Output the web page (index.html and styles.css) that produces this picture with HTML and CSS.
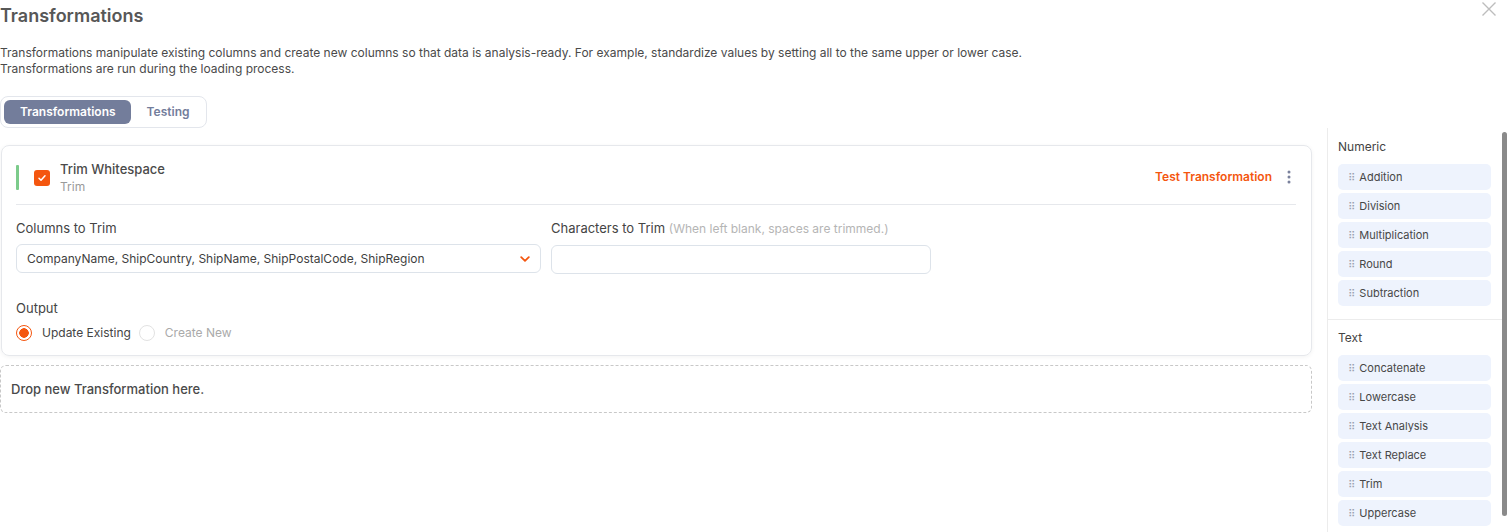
FILE: index.html
```html
<!doctype html>
<html lang="en">
    <head>
        <meta charset="UTF-8" />
        <meta name="viewport" content="width=device-width, initial-scale=1.0" />
        <title>Transformations</title>
        <link rel="stylesheet" href="styles.css">
    </head>
    <body>
        <div class="header">
            <h1 class="title">Transformations</h1>
            <button class="close" aria-label="Close">
                <svg width="16" height="16" viewBox="0 0 16 16"><path d="M1.5 1.5l13 13M14.5 1.5l-13 13" stroke="#bdbdbd" stroke-width="1.4" fill="none"/></svg>
            </button>
        </div>
        <p class="desc">
            Transformations manipulate existing columns and create new columns so that data is analysis-ready. For example, standardize values by setting all to the same upper or lower case.<br>
            Transformations are run during the loading process.
        </p>
        <div class="tabs">
            <span class="tab active">Transformations</span>
            <span class="tab">Testing</span>
        </div>

        <div class="workspace">
            <div class="main">
                <div class="card">
                    <div class="cardHead">
                        <span class="statusBar"></span>
                        <span class="check">
                            <svg width="10" height="10" viewBox="0 0 10 10"><path d="M2 5.2l2 2 4-4.4" stroke="#fff" stroke-width="1.5" fill="none" stroke-linecap="round" stroke-linejoin="round"/></svg>
                        </span>
                        <div class="cardTitle">
                            <div class="name">Trim Whitespace</div>
                            <div class="type">Trim</div>
                        </div>
                        <a class="testLink">Test Transformation</a>
                        <span class="kebab">
                            <svg width="4" height="14" viewBox="0 0 4 14"><circle cx="2" cy="2" r="1.5" fill="#7a819c"/><circle cx="2" cy="7" r="1.5" fill="#7a819c"/><circle cx="2" cy="12" r="1.5" fill="#7a819c"/></svg>
                        </span>
                    </div>
                    <div class="fields">
                        <div class="field wide">
                            <label class="fieldLabel">Columns to Trim</label>
                            <div class="select">
                                <span>CompanyName, ShipCountry, ShipName, ShipPostalCode, ShipRegion</span>
                                <svg width="10" height="6" viewBox="0 0 10 6"><path d="M1.2 1.2L5 4.8l3.8-3.6" stroke="#f4560f" stroke-width="1.8" fill="none" stroke-linecap="round" stroke-linejoin="round"/></svg>
                            </div>
                        </div>
                        <div class="field narrow">
                            <label class="fieldLabel">Characters to Trim <span class="hint">(When left blank, spaces are trimmed.)</span></label>
                            <input class="textInput" type="text" />
                        </div>
                    </div>
                    <div class="output">
                        <div class="fieldLabel">Output</div>
                        <div class="radios">
                            <label class="radio on"><span class="dot"></span>Update Existing</label>
                            <label class="radio off"><span class="dot"></span>Create New</label>
                        </div>
                    </div>
                </div>
                <div class="dropZone">Drop new Transformation here.</div>
            </div>

            <div class="sidebar">
                <div class="group">
                    <div class="groupTitle">Numeric</div>
                    <div class="item"><span class="grip">⠿</span>Addition</div>
                    <div class="item"><span class="grip">⠿</span>Division</div>
                    <div class="item"><span class="grip">⠿</span>Multiplication</div>
                    <div class="item"><span class="grip">⠿</span>Round</div>
                    <div class="item"><span class="grip">⠿</span>Subtraction</div>
                </div>
                <div class="group">
                    <div class="groupTitle">Text</div>
                    <div class="item"><span class="grip">⠿</span>Concatenate</div>
                    <div class="item"><span class="grip">⠿</span>Lowercase</div>
                    <div class="item"><span class="grip">⠿</span>Text Analysis</div>
                    <div class="item"><span class="grip">⠿</span>Text Replace</div>
                    <div class="item"><span class="grip">⠿</span>Trim</div>
                    <div class="item"><span class="grip">⠿</span>Uppercase</div>
                </div>
                <div class="scrollThumb"></div>
            </div>
        </div>
    </body>
</html>
```

FILE: styles.css
```css
body {
    margin: 0;
    font-family: Inter, "Noto Sans", sans-serif;
    color: #444;
    background: #fff;
    overflow: hidden;
}
.header {
    display: flex;
    justify-content: space-between;
    align-items: flex-start;
    height: 32px;
}
.title {
    margin: 0;
    padding-top: 5px;
    font-size: 18px;
    line-height: 22px;
    font-weight: 600;
    color: #575757;
}
.close {
    border: none;
    background: none;
    padding: 0;
    margin: 1px 10px 0 0;
    width: 16px;
    height: 16px;
}
.desc {
    margin: 13px 0 0;
    font-size: 12px;
    line-height: 16px;
    color: #4a4a4a;
}
.tabs {
    display: inline-flex;
    margin-top: 19px;
    padding: 3px;
    border: 1px solid #e3e6ec;
    border-radius: 8px;
    width: 199px;
}
.tab {
    font-size: 12px;
    font-weight: 600;
    line-height: 24px;
    color: #737d9b;
    padding: 0 15px 0 16px;
    border-radius: 6px;
}
.tab.active {
    background: #737d9b;
    color: #fff;
}
.workspace {
    display: flex;
    height: 404px;
}
.main {
    width: 1312px;
    padding-top: 17px;
}
.card {
    margin-left: 1px;
    border: 1px solid #e6e8ec;
    border-radius: 8px;
    padding: 0 15px 0 14px;
    height: 209px;
    box-shadow: 0 1px 4px rgba(0, 0, 0, 0.05);
}
.cardHead {
    display: flex;
    align-items: center;
    padding: 15px 0 9px;
    border-bottom: 1px solid #e6e8ec;
}
.statusBar {
    width: 3px;
    height: 25px;
    margin-top: -2px;
    background: #7ccb8b;
    border-radius: 1px;
}
.check {
    width: 16px;
    height: 16px;
    margin-left: 15px;
    border-radius: 3px;
    background: #f4560f;
    display: flex;
    align-items: center;
    justify-content: center;
}
.cardTitle {
    margin-left: 10px;
    flex: 1;
}
.name {
    font-size: 13px;
    line-height: 17px;
    font-weight: 500;
    color: #4a4a4a;
}
.type {
    font-size: 12px;
    line-height: 17px;
    color: #9a9a9a;
}
.testLink {
    font-size: 12px;
    font-weight: 600;
    color: #f4560f;
    margin: -3px 15px 0 0;
}
.kebab {
    display: flex;
    margin: -3px 5px 0 0;
}
.fields {
    display: flex;
    gap: 10px;
    margin-top: 15px;
}
.field.wide {
    width: 525px;
}
.field.narrow {
    width: 380px;
}
.fieldLabel {
    display: block;
    font-size: 13px;
    line-height: 16px;
    color: #444;
    margin-bottom: 8px;
}
.hint {
    color: #b5b5b5;
    font-size: 12px;
}
.select {
    height: 29px;
    box-sizing: border-box;
    border: 1px solid #dde3ea;
    border-radius: 6px;
    display: flex;
    align-items: center;
    justify-content: space-between;
    padding: 0 10px;
    font-size: 12px;
    color: #3f3f3f;
}
.textInput {
    width: 100%;
    height: 29px;
    box-sizing: border-box;
    border: 1px solid #dde3ea;
    border-radius: 6px;
    margin: 0;
}
.output {
    margin-top: 26px;
}
.output .fieldLabel {
    margin-bottom: 9px;
}
.radios {
    display: flex;
    gap: 8px;
}
.radio {
    display: flex;
    align-items: center;
    font-size: 12px;
    line-height: 16px;
}
.radio .dot {
    width: 16px;
    height: 16px;
    border-radius: 50%;
    box-sizing: border-box;
    margin-right: 10px;
}
.radio.on {
    color: #444;
}
.radio.on .dot {
    border: 1px solid #f4560f;
    background: radial-gradient(circle, #f4560f 0 4.5px, #fff 5px);
}
.radio.off {
    color: #aaa;
}
.radio.off .dot {
    border: 1px solid #e2e2e2;
}
.dropZone {
    margin-top: 9px;
    height: 48px;
    box-sizing: border-box;
    border: 1px dashed #c8c8c8;
    border-radius: 6px;
    padding-left: 10px;
    display: flex;
    align-items: center;
    font-size: 13px;
    font-weight: 500;
    color: #4a4a4a;
}
.sidebar {
    position: relative;
    margin-left: 15px;
    flex: 1;
    border-left: 1px solid #ececec;
    overflow: hidden;
}
.scrollThumb {
    position: absolute;
    top: 4px;
    right: 0;
    width: 5px;
    height: 384px;
    background: #8a8a8a;
    border-radius: 3px;
}
.group {
    padding: 11px 16px 13px 10px;
    display: flex;
    flex-direction: column;
    gap: 3px;
}
.group + .group {
    border-top: 1px solid #ececec;
    padding-top: 10px;
}
.groupTitle {
    font-size: 12px;
    line-height: 16px;
    color: #444;
    margin-bottom: 6px;
}
.item {
    height: 26px;
    background: #eef3fd;
    border-radius: 5px;
    display: flex;
    align-items: center;
    padding-left: 10px;
    font-size: 11px;
    color: #474747;
}
.grip {
    color: #9aa0ae;
    font-size: 10px;
    margin-right: 4px;
    font-family: "DejaVu Sans", sans-serif;
}
```
